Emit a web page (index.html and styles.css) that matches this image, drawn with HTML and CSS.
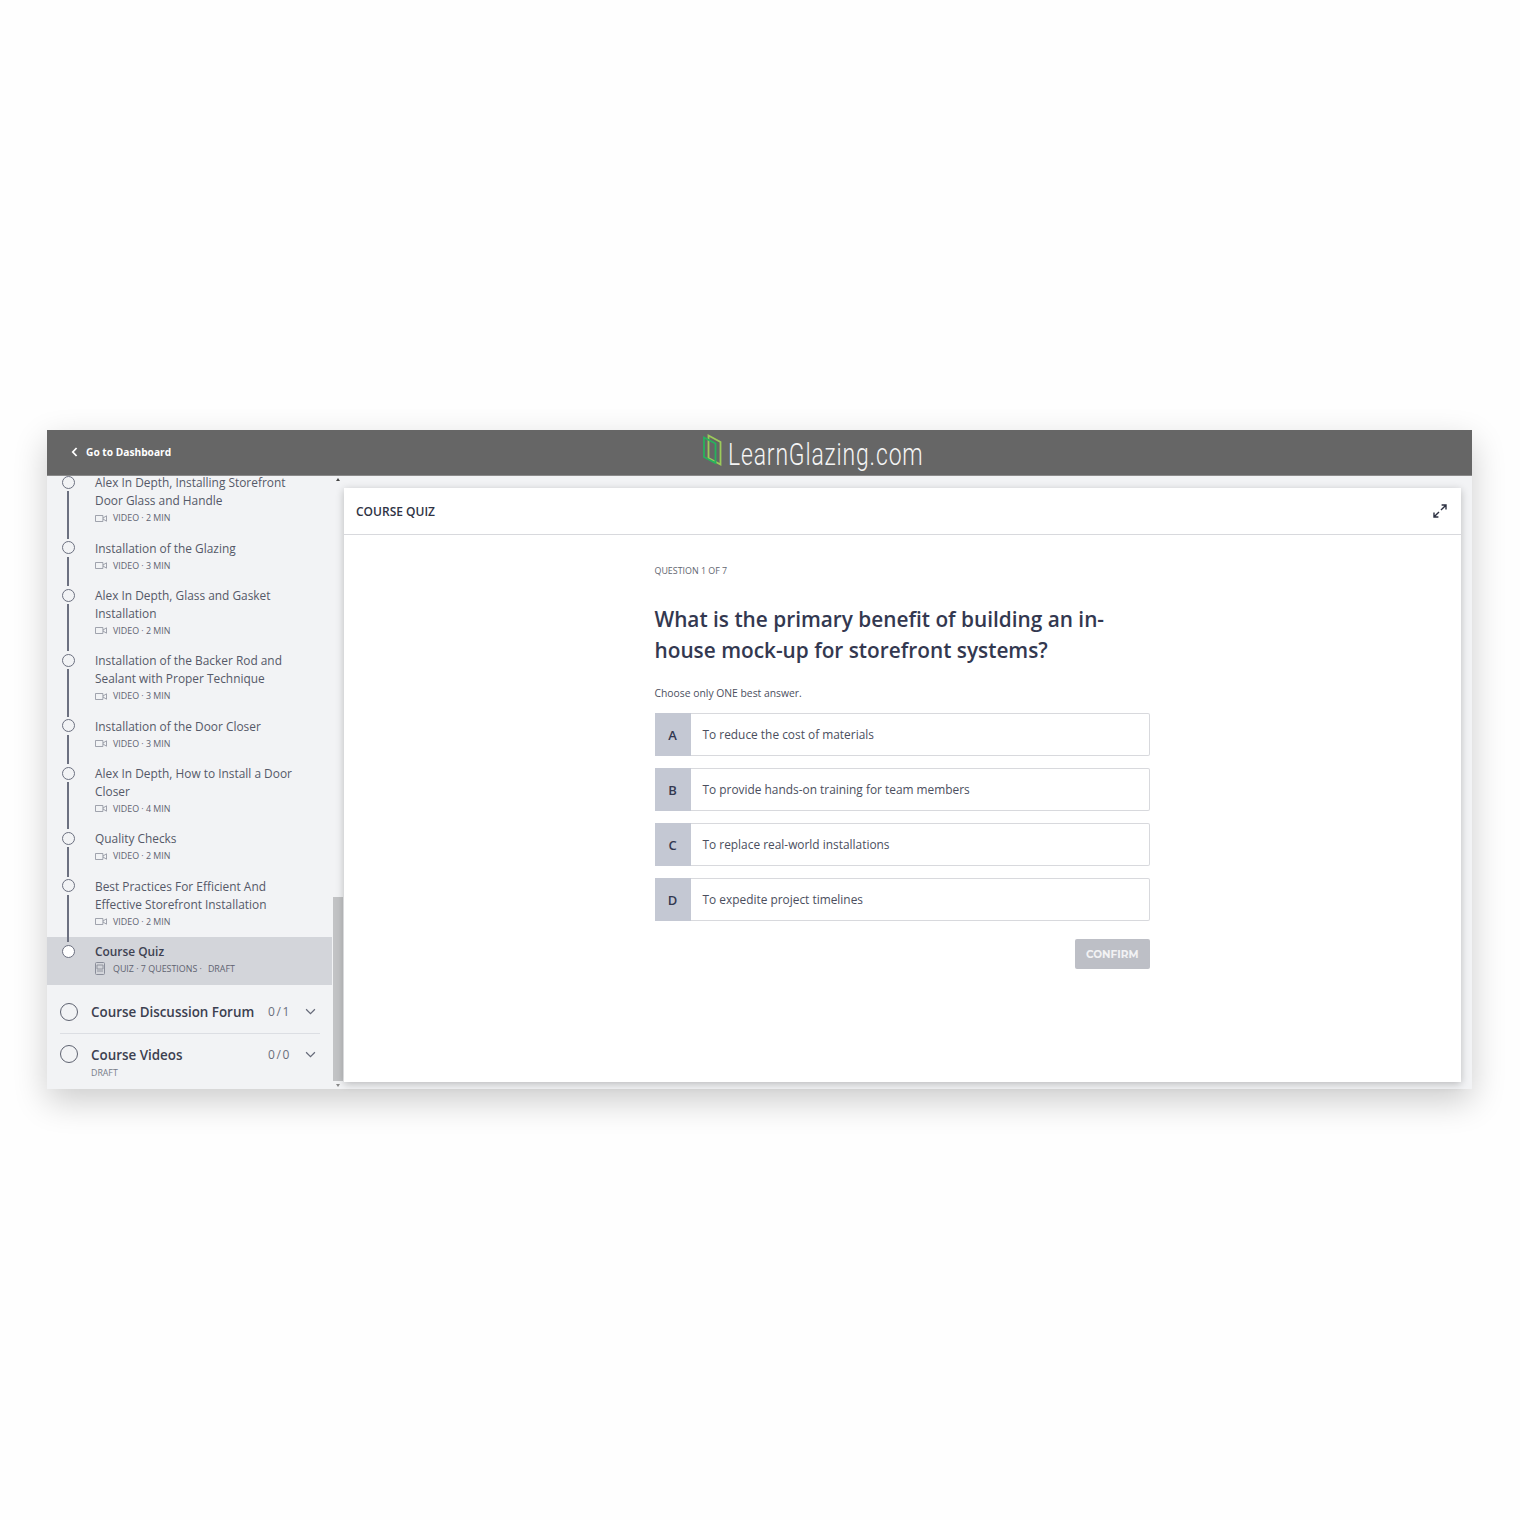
FILE: index.html
```html
<!DOCTYPE html>
<html lang="en">
<head>
<meta charset="utf-8">
<title>Course Quiz</title>
<link rel="stylesheet" href="styles.css">
</head>
<body>
<svg class="defs" width="0" height="0" aria-hidden="true">
  <symbol id="video" viewBox="0 0 12 7"><path d="M.5.5h7.4v6H.5zM8 3l3.5-2.2v5.4L8 4" fill="none" stroke="currentColor" stroke-width=".8"/></symbol>
  <symbol id="chev" viewBox="0 0 12 7"><path d="M1.2 1l4.8 4.8L10.8 1" fill="none" stroke="currentColor" stroke-width="1.3"/></symbol>
</svg>
<div class="app">
  <header class="topbar">
    <a class="back"><svg class="back-icon" viewBox="0 0 7 10"><path d="M5.6 1L1.8 5l3.8 4" fill="none" stroke="#fff" stroke-width="1.8"/></svg>Go to Dashboard</a>
    <div class="brand">
      <svg class="brand-mark" viewBox="0 0 20 32">
        <path d="M6.5 1.5L18.5 8v22.5L6.5 24z" fill="none" stroke="#9ccb5a" stroke-width="1.8"/>
        <path d="M2 3.5L13.5 9.5V29L2 23z" fill="none" stroke="#27b35c" stroke-width="1.8"/>
      </svg>
      <span class="brand-name">LearnGlazing.com</span>
    </div>
  </header>
  <div class="body">
    <aside class="sidebar">
      <div class="outline">
        <ul class="lessons">
          <li class="lesson"><span class="dot"></span><div class="lesson-title">Alex In Depth, Installing Storefront Door Glass and Handle</div><div class="meta"><svg class="ico"><use href="#video"/></svg>VIDEO · 2 MIN</div></li>
          <li class="lesson"><span class="dot"></span><div class="lesson-title">Installation of the Glazing</div><div class="meta"><svg class="ico"><use href="#video"/></svg>VIDEO · 3 MIN</div></li>
          <li class="lesson"><span class="dot"></span><div class="lesson-title">Alex In Depth, Glass and Gasket Installation</div><div class="meta"><svg class="ico"><use href="#video"/></svg>VIDEO · 2 MIN</div></li>
          <li class="lesson"><span class="dot"></span><div class="lesson-title">Installation of the Backer Rod and Sealant with Proper Technique</div><div class="meta"><svg class="ico"><use href="#video"/></svg>VIDEO · 3 MIN</div></li>
          <li class="lesson"><span class="dot"></span><div class="lesson-title">Installation of the Door Closer</div><div class="meta"><svg class="ico"><use href="#video"/></svg>VIDEO · 3 MIN</div></li>
          <li class="lesson"><span class="dot"></span><div class="lesson-title">Alex In Depth, How to Install a Door Closer</div><div class="meta"><svg class="ico"><use href="#video"/></svg>VIDEO · 4 MIN</div></li>
          <li class="lesson"><span class="dot"></span><div class="lesson-title">Quality Checks</div><div class="meta"><svg class="ico"><use href="#video"/></svg>VIDEO · 2 MIN</div></li>
          <li class="lesson"><span class="dot"></span><div class="lesson-title">Best Practices For Efficient And Effective Storefront Installation</div><div class="meta"><svg class="ico"><use href="#video"/></svg>VIDEO · 2 MIN</div></li>
          <li class="lesson is-active"><span class="dot"></span><div class="lesson-title">Course Quiz</div><div class="meta"><svg class="ico ico-quiz" viewBox="0 0 10 13"><rect x=".5" y=".5" width="9" height="12" rx="1" fill="none" stroke="currentColor"/><path d="M2 3h6v4H2zM2 9h6" fill="none" stroke="currentColor" stroke-width=".9"/></svg>QUIZ · 7 QUESTIONS ·<span class="draft-tag">DRAFT</span></div></li>
        </ul>
        <div class="section">
          <span class="ring"></span>
          <div class="section-text"><div class="section-title">Course Discussion Forum</div></div>
          <span class="count">0/1</span>
          <svg class="chev"><use href="#chev"/></svg>
        </div>
        <div class="section section-last">
          <span class="ring"></span>
          <div class="section-text"><div class="section-title">Course Videos</div><div class="draft">DRAFT</div></div>
          <span class="count">0/0</span>
          <svg class="chev"><use href="#chev"/></svg>
        </div>
      </div>
      <div class="scrollbar">
        <span class="arrow arrow-up"></span>
        <div class="track"><div class="thumb"></div></div>
        <span class="arrow arrow-down"></span>
      </div>
    </aside>
    <main class="card">
      <div class="card-head">
        <h2 class="card-title">COURSE QUIZ</h2>
        <svg class="expand" viewBox="0 0 14 14"><path d="M8 6l4.6-4.6M8.6 1h4.4v4.4M6 8l-4.6 4.6M1 8.6V13h4.4" fill="none" stroke="#2d3142" stroke-width="1.4"/></svg>
      </div>
      <div class="quiz">
        <div class="progress">QUESTION 1 OF 7</div>
        <h1 class="question">What is the primary benefit of building an in-house mock-up for storefront systems?</h1>
        <p class="hint">Choose only ONE best answer.</p>
        <div class="answers">
          <div class="answer"><span class="letter">A</span><span class="answer-text">To reduce the cost of materials</span></div>
          <div class="answer"><span class="letter">B</span><span class="answer-text">To provide hands-on training for team members</span></div>
          <div class="answer"><span class="letter">C</span><span class="answer-text">To replace real-world installations</span></div>
          <div class="answer"><span class="letter">D</span><span class="answer-text">To expedite project timelines</span></div>
        </div>
        <div class="actions"><button class="confirm">CONFIRM</button></div>
      </div>
    </main>
  </div>
</div>
</body>
</html>
```
FILE: styles.css
```css
* { box-sizing: border-box; }
html, body { margin: 0; padding: 0; }
body { background: #fefefe; font-family: "Open Sans", sans-serif; color: #4b4f5e; height: 1520px; padding: 430px 48px 0 47px; }
.defs { position: absolute; }
.app { width: 1425px; height: 659px; background: #f2f3f5; box-shadow: 0 12px 32px rgba(0,0,0,.2); display: flex; flex-direction: column; }
.topbar { height: 46px; flex: none; background: #666; border-bottom: 1px solid #8a8a8a; position: relative; display: flex; align-items: center; padding: 0 0 2px 24px; }
.back { display: flex; align-items: center; color: #fff; font-size: 10.2px; font-weight: 700; line-height: 42px; }
.back-icon { width: 7px; height: 10px; margin-right: 8px; }
.brand { position: absolute; left: 655px; top: 4px; display: flex; align-items: center; height: 32px; }
.brand-mark { width: 20px; height: 32px; }
.brand-name { font-family: "Roboto", sans-serif; font-weight: 300; font-size: 31px; letter-spacing: 1.15px; color: #f4f4f4; line-height: 40px; display: inline-block; transform: scaleX(.74); transform-origin: left center; margin: 9px 0 0 6px; white-space: nowrap; }
.body { flex: 1; display: flex; min-height: 0; }
.sidebar { width: 297px; flex: none; display: flex; overflow: hidden; }
.outline { width: 285px; flex: none; overflow: hidden; }
.lessons { list-style: none; margin: -7.6px 0 0; padding: 0; }
.lesson { position: relative; padding: 5px 40px 6.85px 48px; }
.lesson::after { content: ""; position: absolute; left: 20px; width: 1.5px; top: 23px; bottom: -5px; background: #6c7080; z-index: 1; }
.lesson:last-child::after { display: none; }
.dot { position: absolute; left: 15px; top: 7.5px; width: 13px; height: 13px; border-radius: 50%; border: 1px solid #6c7080; background: #f2f3f5; }
.lesson-title { font-size: 11.9px; line-height: 18px; color: #555968; }
.meta { display: flex; align-items: center; font-size: 8.9px; line-height: 17.5px; color: #5f6371; }
.ico { width: 12px; height: 7px; margin-right: 6px; color: #8a8e9a; }
.ico-quiz { width: 10px; height: 13px; margin-right: 8px; }
.draft-tag { margin-left: 6px; }
.is-active { background: #d3d5da; }
.is-active .lesson-title { color: #3e4252; font-weight: 600; }
.is-active .dot { background: #fff; }
.section { display: flex; align-items: center; margin: 0 12px 0 13px; height: 43px; border-bottom: 1px solid #dcdee3; }
.lessons + .section { margin-top: 6.3px; }
.section-last { border-bottom: 0; align-items: flex-start; padding-top: 11px; }
.ring { width: 18px; height: 18px; flex: none; border-radius: 50%; border: 1.5px solid #5e6270; margin-right: 13px; }
.section-text { flex: 1; min-width: 0; }
.section-title { font-size: 13.4px; font-weight: 600; color: #3c4050; line-height: 20px; white-space: nowrap; }
.draft { font-size: 8.8px; color: #777b88; line-height: 14px; margin-top: 1px; }
.count { font-size: 12px; letter-spacing: 1.6px; color: #6a6e7c; margin-right: 14px; line-height: 20px; flex: none; }
.chev { width: 11px; height: 7px; color: #656978; flex: none; margin-right: 4px; }
.section-last .chev { margin-top: 6px; }
.scrollbar { width: 12px; flex: none; display: flex; flex-direction: column; }
.arrow { height: 12px; flex: none; position: relative; }
.arrow-down { height: 8px; }
.arrow::after { content: ""; position: absolute; left: 3.5px; border: 2.5px solid transparent; }
.arrow-up::after { top: 2px; border-bottom: 3px solid #444; border-top: 0; }
.arrow-down::after { top: 3px; border-top: 3px solid #888; border-bottom: 0; }
.track { flex: 1; display: flex; flex-direction: column; justify-content: flex-end; padding: 0 1px; }
.thumb { height: 184px; background: #c2c3c5; }
.card { flex: 1; margin: 12px 11px 7px 0; background: #fff; box-shadow: 0 2px 8px rgba(0,0,0,.24); display: flex; flex-direction: column; min-width: 0; }
.card-head { height: 47px; flex: none; border-bottom: 1px solid #d8d9dd; display: flex; align-items: center; justify-content: space-between; padding: 0 14px 0 12px; }
.card-title { margin: 0; font-size: 12px; font-weight: 600; color: #2f3344; }
.expand { width: 14px; height: 14px; }
.quiz { width: 495.5px; margin-left: 310.5px; padding-top: 29px; }
.progress { font-size: 8.9px; line-height: 14px; color: #62666f; }
.question { margin: 26px 0 0; font-size: 20.8px; line-height: 31px; font-weight: 600; color: #333850; }
.hint { margin: 19px 0 0; font-size: 10.35px; line-height: 16px; color: #4b4f5e; }
.answers { margin-top: 12px; display: flex; flex-direction: column; gap: 12px; }
.answer { height: 43px; display: flex; align-items: center; background: #fff; border: 1px solid #d8d9dd; border-left: 0; border-radius: 2px; }
.letter { width: 36px; height: 43px; margin: -1px 0; flex: none; background: #c4c8d3; color: #333850; font-size: 13px; font-weight: 600; display: flex; align-items: center; justify-content: center; }
.answer-text { margin: -2px 0 0 12px; font-size: 11.9px; color: #4b4f5e; }
.actions { display: flex; justify-content: flex-end; margin-top: 18px; }
.confirm { width: 75.5px; height: 30px; border: 0; border-radius: 2px; background: #bdbfc6; color: #f2f2f4; font-family: "Montserrat", "Inter", sans-serif; font-size: 10.5px; font-weight: 700; padding: 0; }
```
